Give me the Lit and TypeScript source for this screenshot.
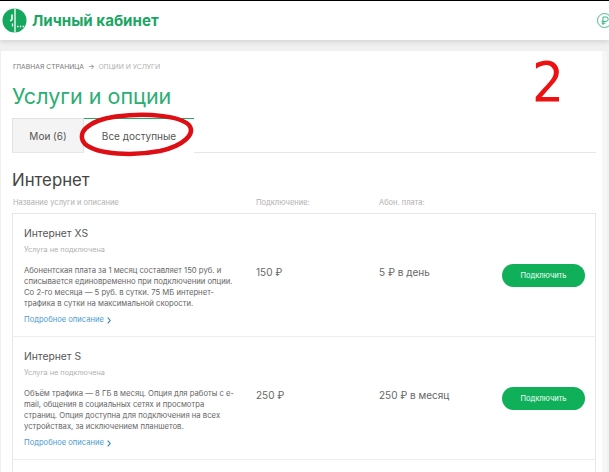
import { LitElement, html, css } from "lit";
import { customElement } from "lit/decorators.js";

const rows = [
  {
    name: "Интернет XS",
    desc: ["Абонентская плата за 1 месяц составляет 150 руб. и", "списывается единовременно при подключении опции.", "Со 2-го месяца — 5 руб. в сутки. 75 МБ интернет-", "трафика в сутки на максимальной скорости."],
    price: "150 ₽",
    fee: "5 ₽ в день",
  },
  {
    name: "Интернет S",
    desc: ["Объём трафика — 8 ГБ в месяц. Опция для работы с e-", "mail, общения в социальных сетях и просмотра", "страниц. Опция доступна для подключения на всех", "устройствах, за исключением планшетов."],
    price: "250 ₽",
    fee: "250 ₽ в месяц",
  },
];

@customElement("app-root")
export class AppRoot extends LitElement {
  static styles = css`
    :host {
      display: block;
      position: relative;
      width: 609px;
      height: 472px;
      overflow: hidden;
      background: #f0f0f0;
      font-family: "Inter", "Liberation Sans", sans-serif;
      color: #333;
    }
    .top {
      box-sizing: border-box;
      height: 40px;
      border-top: 1px solid #000;
      background: #fff;
      display: flex;
      align-items: center;
      padding: 0 0 0 2px;
      box-shadow: 0 2px 5px rgba(0, 0, 0, 0.12);
      position: relative;
    }
    .logo { display: block; flex: none; margin-right: 5px; }
    .brand { font-size: 15.1px; font-weight: 700; color: #1ba664; white-space: nowrap; flex: 1; }
    .rub { display: block; flex: none; margin-right: -4px; }
    .card {
      box-sizing: border-box;
      margin: 11px 2px 0 1px;
      height: 421px;
      background: #fff;
      border-right: 5px solid #f6f6f6;
      padding: 11px 6px 0 11px;
    }
    .crumbs { display: flex; gap: 4px; font-size: 6.8px; line-height: 9px; color: #777; text-transform: uppercase; white-space: nowrap; padding-left: 1px; }
    .crumbs .cur { color: #b0b0b0; }
    h1 { margin: 11px 0 0; font-size: 21.5px; line-height: 28px; font-weight: 400; color: #2bae73; }
    .tabs { display: flex; margin-top: 8px; height: 35px; box-sizing: border-box; border-bottom: 1px solid #e6e6e6; font-size: 10px; }
    .tab { box-sizing: border-box; display: flex; align-items: center; justify-content: center; }
    .tab.off { width: 72px; background: #f4f4f4; border: 1px solid #e2e2e2; border-bottom: none; color: #555; }
    .tab.on { width: 110px; height: 35px; background: #fff; border-top: 1px solid #1faa6a; color: #555; }
    h2 { margin: 16px 0 0; font-size: 16.8px; line-height: 22px; font-weight: 400; color: #444; }
    .grid { display: grid; }
    .heads { margin-top: 6px; font-size: 7.5px; line-height: 11px; color: #b0b0b0; white-space: nowrap; padding-left: 1px; grid-template-columns: 243px 123px 123px 94px; }
    .table { margin-top: 5px; border: 1px solid #e6e6e6; border-bottom: none; height: 300px; }
    .row { align-items: center; border-bottom: 1px solid #eeeeee; padding-left: 11px; grid-template-columns: 232px 123px 123px 83px; }
    .info { padding: 12px 0 11px; white-space: nowrap; }
    .name { font-size: 10.3px; line-height: 14px; color: #555; }
    .status { margin-top: 5px; font-size: 7.3px; line-height: 10px; color: #b0b0b0; }
    .desc { margin-top: 10px; font-size: 7.7px; line-height: 11px; color: #666; }
    .more { margin-top: 6px; font-size: 7.6px; line-height: 10px; color: #4a9ccf; display: flex; align-items: center; gap: 3px; }
    .val { font-size: 10px; color: #666; white-space: nowrap; margin-bottom: 6px; }
    .btn { height: 23px; border-radius: 12px; background: #10b05a; color: #f2fff8; font-size: 7.5px; display: flex; align-items: center; justify-content: center; white-space: nowrap; }
    .two { position: absolute; left: 532px; top: 50px; font: 56px/64px "DejaVu Sans", sans-serif; color: #ee1111; transform: scaleX(0.9); transform-origin: left; }
    .ring { position: absolute; left: 76px; top: 110px; display: block; }
  `;

  render() {
    return html`
      <div class="top">
        <svg class="logo" width="25" height="25" viewBox="0 0 25 25">
          <circle cx="12.5" cy="12.5" r="12" fill="#14a75d" />
          <path d="M13 0.5V24.5" stroke="#fff" stroke-width="1.3" fill="none" />
          <path d="M10 6.5v4.5c0 1-1 1.6-2 1.8" stroke="#fff" stroke-width="1.6" fill="none" />
          <path d="M10.5 15.5v3" stroke="#fff" stroke-width="1.3" fill="none" />
          <path d="M15 18.5h1.5M17.8 18.5h1.5M20.6 18.5h1.5" stroke="#fff" stroke-width="1.5" fill="none" />
        </svg>
        <div class="brand">Личный кабинет</div>
        <svg class="rub" width="17" height="17" viewBox="0 0 17 17">
          <circle cx="8.5" cy="8.5" r="7" fill="none" stroke="#39b57f" stroke-width="0.9" />
          <path d="M7 13V5h3a2 2 0 0 1 0 4.4H5.6M5.6 11.2h4" fill="none" stroke="#39b57f" stroke-width="1" />
        </svg>
      </div>
      <div class="card">
        <div class="crumbs"><span>Главная страница</span><span>→</span><span class="cur">Опции и услуги</span></div>
        <h1>Услуги и опции</h1>
        <div class="tabs">
          <div class="tab off">Мои (6)</div>
          <div class="tab on">Все доступные</div>
        </div>
        <h2>Интернет</h2>
        <div class="grid heads">
          <span>Название услуги и описание</span><span>Подключение:</span><span>Абон. плата:</span><span></span>
        </div>
        <div class="table">
          ${rows.map(
            (r) => html`
              <div class="grid row">
                <div class="info">
                  <div class="name">${r.name}</div>
                  <div class="status">Услуга не подключена</div>
                  <div class="desc">${r.desc.map((l) => html`<div>${l}</div>`)}</div>
                  <div class="more">
                    Подробное описание
                    <svg width="4" height="7" viewBox="0 0 4 7"><path d="M0.7 0.7L3.2 3.5L0.7 6.3" fill="none" stroke="#2f7fb5" stroke-width="1.1" /></svg>
                  </div>
                </div>
                <div class="val">${r.price}</div>
                <div class="val">${r.fee}</div>
                <div class="btn">Подключить</div>
              </div>
            `
          )}
        </div>
      </div>
      <svg class="ring" width="122" height="50" viewBox="0 0 122 50">
        <path d="M40 6.5C72 2.5 104 6 113 15C120 24 107 36 84 41C58 46 22 45 9 34C0 24 10 11 40 6.5Z" fill="none" stroke="#dd0f14" stroke-width="4.4" />
      </svg>
      <div class="two">2</div>
    `;
  }
}
